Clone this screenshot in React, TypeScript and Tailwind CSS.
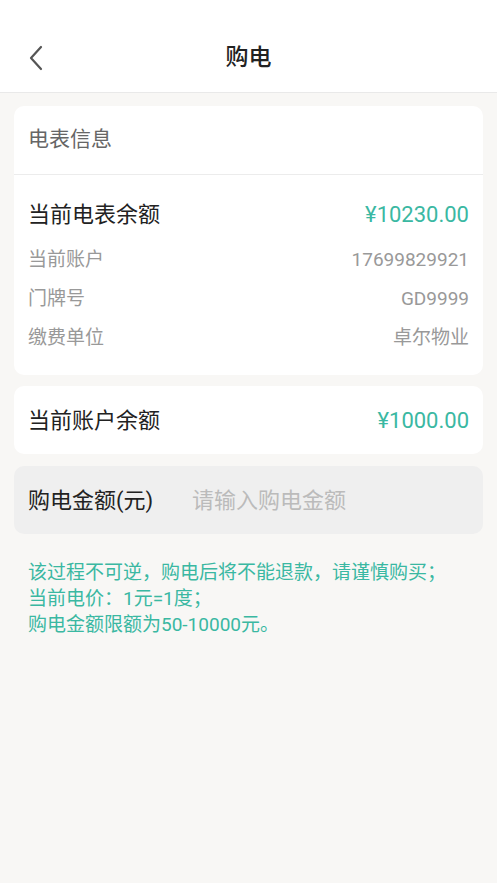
export default function App() {
  const font = { fontFamily: 'Roboto, "Noto Sans CJK SC", sans-serif' };
  const rows = [
    { label: "当前账户", value: "17699829921" },
    { label: "门牌号", value: "GD9999" },
    { label: "缴费单位", value: "卓尔物业" },
  ];

  return (
    <div className="min-h-[883px] w-full bg-[#f8f7f5]" style={font}>
      {/* Top bar */}
      <header className="relative flex h-[93px] items-end justify-center border-b border-[#e9e9e9] bg-white pb-[17px]">
        <button className="absolute left-[24px] top-[44px] flex h-[28px] w-[22px] items-center justify-center">
          <svg width="18" height="28" viewBox="0 0 18 28" fill="none">
            <path d="M15 3 L5 14 L15 25" stroke="#555" strokeWidth="2.2" strokeLinecap="round" strokeLinejoin="round" />
          </svg>
        </button>
        <h1 className="text-[23px] font-medium text-[#222]">购电</h1>
      </header>

      <main className="flex flex-col px-[14px] pt-[13px]">
        {/* Meter info */}
        <section className="rounded-[10px] bg-white">
          <div className="flex h-[69px] items-center border-b border-[#ececec] px-[14px] text-[21px] text-[#666]">
            电表信息
          </div>
          <div className="flex flex-col px-[14px] pb-[17px] pt-[19px]">
            <div className="flex h-[40px] items-center justify-between">
              <span className="text-[22px] text-[#222]">当前电表余额</span>
              <span className="text-[22px] text-[#3ab8a2]">¥10230.00</span>
            </div>
            <div className="mt-[7px] flex flex-col">
              {rows.map((r) => (
                <div key={r.label} className="flex h-[39px] items-center justify-between text-[19px] text-[#999]">
                  <span>{r.label}</span>
                  <span>{r.value}</span>
                </div>
              ))}
            </div>
          </div>
        </section>

        {/* Account balance */}
        <section className="mt-[11px] flex h-[68px] items-center justify-between rounded-[10px] bg-white px-[14px]">
          <span className="text-[22px] text-[#222]">当前账户余额</span>
          <span className="text-[22px] text-[#3ab8a2]">¥1000.00</span>
        </section>

        {/* Amount input */}
        <section className="mt-[12px] flex h-[68px] items-center rounded-[10px] bg-[#efefef] px-[14px]">
          <span className="w-[164px] shrink-0 text-[22px] text-[#222]">购电金额(元)</span>
          <input
            className="min-w-0 flex-1 bg-transparent text-[22px] text-[#222] outline-none placeholder:text-[#bbbbbb]"
            placeholder="请输入购电金额"
          />
        </section>

        {/* Notes */}
        <div className="mt-[26px] flex flex-col px-[14px] text-[19px] leading-[26px] text-[#3ab8a2]">
          <p>该过程不可逆，购电后将不能退款，请谨慎购买；</p>
          <p>当前电价：1元=1度；</p>
          <p>购电金额限额为50-10000元。</p>
        </div>
      </main>
    </div>
  );
}
